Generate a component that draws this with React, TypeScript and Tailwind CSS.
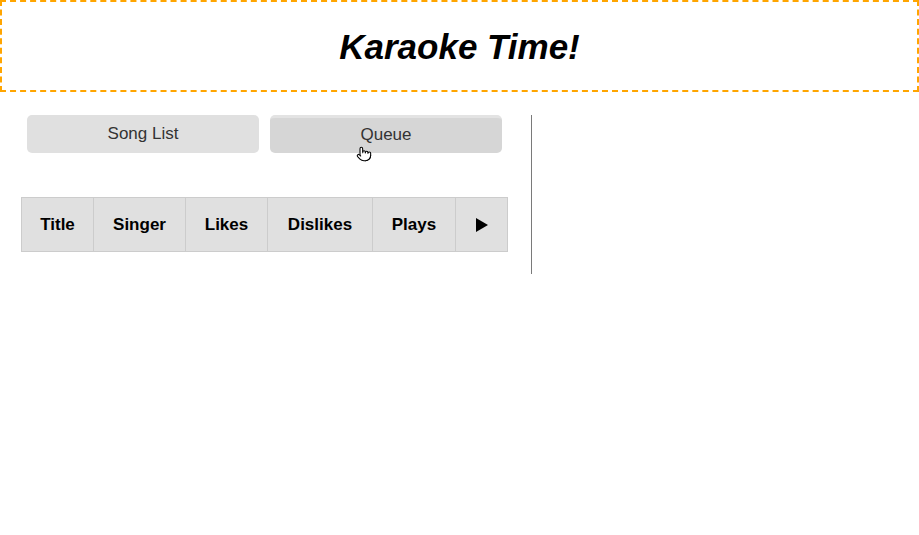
import { Pointer } from 'lucide-react';

const columns = [
  { label: 'Title', width: 'w-[72px]' },
  { label: 'Singer', width: 'w-[92px]' },
  { label: 'Likes', width: 'w-[82px]' },
  { label: 'Dislikes', width: 'w-[105px]' },
  { label: 'Plays', width: 'w-[83px]' },
];

function PlayIcon() {
  return (
    <svg width="12" height="14" viewBox="0 0 12 14" className="inline-block">
      <polygon points="0,0 12,7 0,14" fill="#000" />
    </svg>
  );
}

export default function App() {
  return (
    <div className="min-h-[535px] bg-white font-['Liberation_Sans',Arial,sans-serif] text-black">
      {/* Header */}
      <header className="flex h-[92px] w-[919px] items-center justify-center border-2 border-dashed border-[#ffa500]">
        <h1 className="text-[35px] font-bold italic leading-none">Karaoke Time!</h1>
      </header>

      <main className="mt-[23px] flex">
        {/* Left column */}
        <section className="w-[532px] border-r border-[#7a7a7a] pb-[22px] pl-[21px] pr-[23px]">
          <div className="relative mx-[6px] flex gap-[11px]">
            <button className="h-[38px] flex-1 rounded-[5px] bg-[#e0e0e0] text-[17px] text-[#333]">
              Song List
            </button>
            <button className="h-[38px] flex-1 rounded-[5px] border-t-[3px] border-[#e3e3e3] bg-[#d6d6d6] pb-[1px] text-[17px] text-[#333]">
              Queue
            </button>
            {/* mouse pointer */}
            <Pointer
              className="absolute left-[329px] top-[31px]"
              size={16}
              fill="#fff"
              stroke="#000"
              strokeWidth={1.6}
            />
          </div>

          <table className="mt-[44px] w-[487px] border-collapse bg-[#e0e0e0]">
            <thead>
              <tr className="h-[54px]">
                {columns.map((c) => (
                  <th key={c.label} className={`${c.width} border border-[#cccccc] text-center text-[17px] font-bold`}>
                    {c.label}
                  </th>
                ))}
                <th className="w-[52px] border border-[#cccccc] text-center">
                  <PlayIcon />
                </th>
              </tr>
            </thead>
          </table>
        </section>

        {/* Right column (empty) */}
        <section className="flex-1" />
      </main>
    </div>
  );
}
